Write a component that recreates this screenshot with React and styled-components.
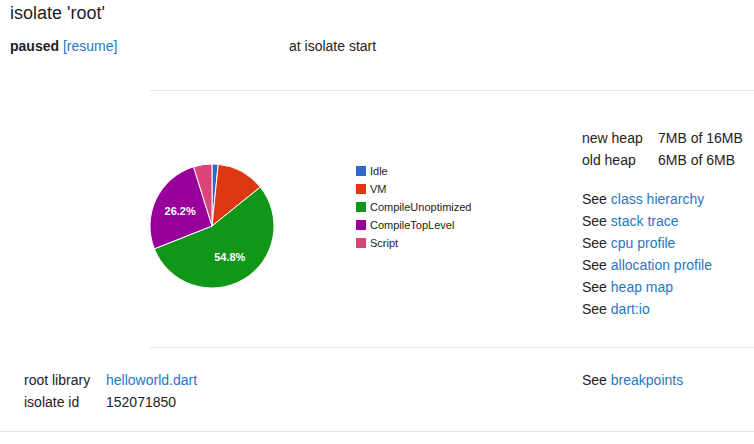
import React from "react";
import styled, { createGlobalStyle } from "styled-components";

const GlobalStyle = createGlobalStyle`
  html, body {
    margin: 0;
    padding: 0;
    background: #fff;
  }
  body {
    font-family: "Liberation Sans", Arial, sans-serif;
    font-size: 14px;
    color: #222;
  }
`;

const Page = styled.div`
  width: 754px;
`;

const Title = styled.h1`
  margin: 0;
  padding: 1px 10px 0;
  height: 23px;
  font-size: 18px;
  font-weight: normal;
  line-height: 24px;
`;

const StatusRow = styled.div`
  display: grid;
  grid-template-columns: 279px 1fr;
  padding: 0 10px;
  margin-top: 11px;
  line-height: 22px;
`;

const Strong = styled.span`
  font-weight: bold;
`;

const Link = styled.a`
  color: #1f77c4;
  text-decoration: none;
  cursor: pointer;
`;

const Overview = styled.div`
  display: flex;
  margin: 33px 0 0 150px;
  padding-bottom: 27px;
  border-top: 1px solid #e6e6e6;
  border-bottom: 1px solid #e6e6e6;
`;

const ChartArea = styled.div`
  flex: 0 0 432px;
  display: flex;
  align-items: flex-start;
  padding-top: 71px;
`;

const PieBox = styled.div`
  margin-left: -2px;
  line-height: 0;
`;

const Legend = styled.ul`
  list-style: none;
  margin: 0 0 0 80px;
  padding: 0;
  font-size: 11px;
  color: #222;
`;

const LegendItem = styled.li`
  display: flex;
  align-items: center;
  height: 18px;
  gap: 4px;
`;

const Swatch = styled.span`
  width: 10px;
  height: 10px;
  background: ${(p) => p.$color};
`;

const SideColumn = styled.div`
  display: flex;
  flex-direction: column;
  padding-top: 36px;
  line-height: 22px;
`;

const KeyValue = styled.div`
  display: grid;
  grid-template-columns: ${(p) => p.$labelWidth}px auto;
`;

const LinkList = styled.div`
  margin-top: 17px;
`;

const Details = styled.div`
  display: flex;
  padding: 21px 0 18px;
  border-bottom: 1px solid #e6e6e6;
  line-height: 22px;
`;

const DetailsLeft = styled.div`
  flex: 0 0 582px;
  padding-left: 24px;
  box-sizing: border-box;
`;

const slices = [
  { name: "Idle", value: 1.6, color: "#3366cc" },
  { name: "VM", value: 12.6, color: "#dc3912" },
  { name: "CompileUnoptimized", value: 54.8, color: "#109618", label: true },
  { name: "CompileTopLevel", value: 26.2, color: "#990099", label: true },
  { name: "Script", value: 4.8, color: "#dd4477" },
];

function point(cx, cy, r, frac) {
  const a = frac * Math.PI * 2;
  return [cx + r * Math.sin(a), cy - r * Math.cos(a)];
}

function Pie({ data, size = 128, radius = 62 }) {
  const c = size / 2;
  let acc = 0;
  const total = data.reduce((s, d) => s + d.value, 0);
  const parts = data.map((d) => {
    const start = acc / total;
    acc += d.value;
    const end = acc / total;
    const [x1, y1] = point(c, c, radius, start);
    const [x2, y2] = point(c, c, radius, end);
    const large = end - start > 0.5 ? 1 : 0;
    const [lx, ly] = point(c, c, radius * 0.57, (start + end) / 2);
    return { ...d, path: `M${c},${c} L${x1},${y1} A${radius},${radius} 0 ${large} 1 ${x2},${y2} Z`, lx, ly };
  });
  return (
    <svg width={size} height={size} viewBox={`0 0 ${size} ${size}`}>
      {parts.map((p) => (
        <path key={p.name} d={p.path} fill={p.color} stroke="#fff" strokeWidth="1" />
      ))}
      {parts
        .filter((p) => p.label)
        .map((p) => (
          <text
            key={p.name + "-l"}
            x={p.lx}
            y={p.ly + 4}
            textAnchor="middle"
            fill="#fff"
            fontSize="11"
            fontWeight="bold"
            fontFamily="Liberation Sans, Arial, sans-serif"
          >
            {p.value}%
          </text>
        ))}
    </svg>
  );
}

const seeLinks = [
  "class hierarchy",
  "stack trace",
  "cpu profile",
  "allocation profile",
  "heap map",
  "dart:io",
];

export default function App() {
  return (
    <Page>
      <GlobalStyle />
      <Title>isolate 'root'</Title>
      <StatusRow>
        <div>
          <Strong>paused</Strong> <Link>[resume]</Link>
        </div>
        <div>at isolate start</div>
      </StatusRow>

      <Overview>
        <ChartArea>
          <PieBox>
            <Pie data={slices} />
          </PieBox>
          <Legend>
            {slices.map((s) => (
              <LegendItem key={s.name}>
                <Swatch $color={s.color} />
                {s.name}
              </LegendItem>
            ))}
          </Legend>
        </ChartArea>
        <SideColumn>
          <KeyValue $labelWidth={76}>
            <span>new heap</span>
            <span>7MB of 16MB</span>
            <span>old heap</span>
            <span>6MB of 6MB</span>
          </KeyValue>
          <LinkList>
            {seeLinks.map((l) => (
              <div key={l}>
                See <Link>{l}</Link>
              </div>
            ))}
          </LinkList>
        </SideColumn>
      </Overview>

      <Details>
        <DetailsLeft>
          <KeyValue $labelWidth={82}>
            <span>root library</span>
            <Link>helloworld.dart</Link>
            <span>isolate id</span>
            <span>152071850</span>
          </KeyValue>
        </DetailsLeft>
        <div>
          See <Link>breakpoints</Link>
        </div>
      </Details>
    </Page>
  );
}
